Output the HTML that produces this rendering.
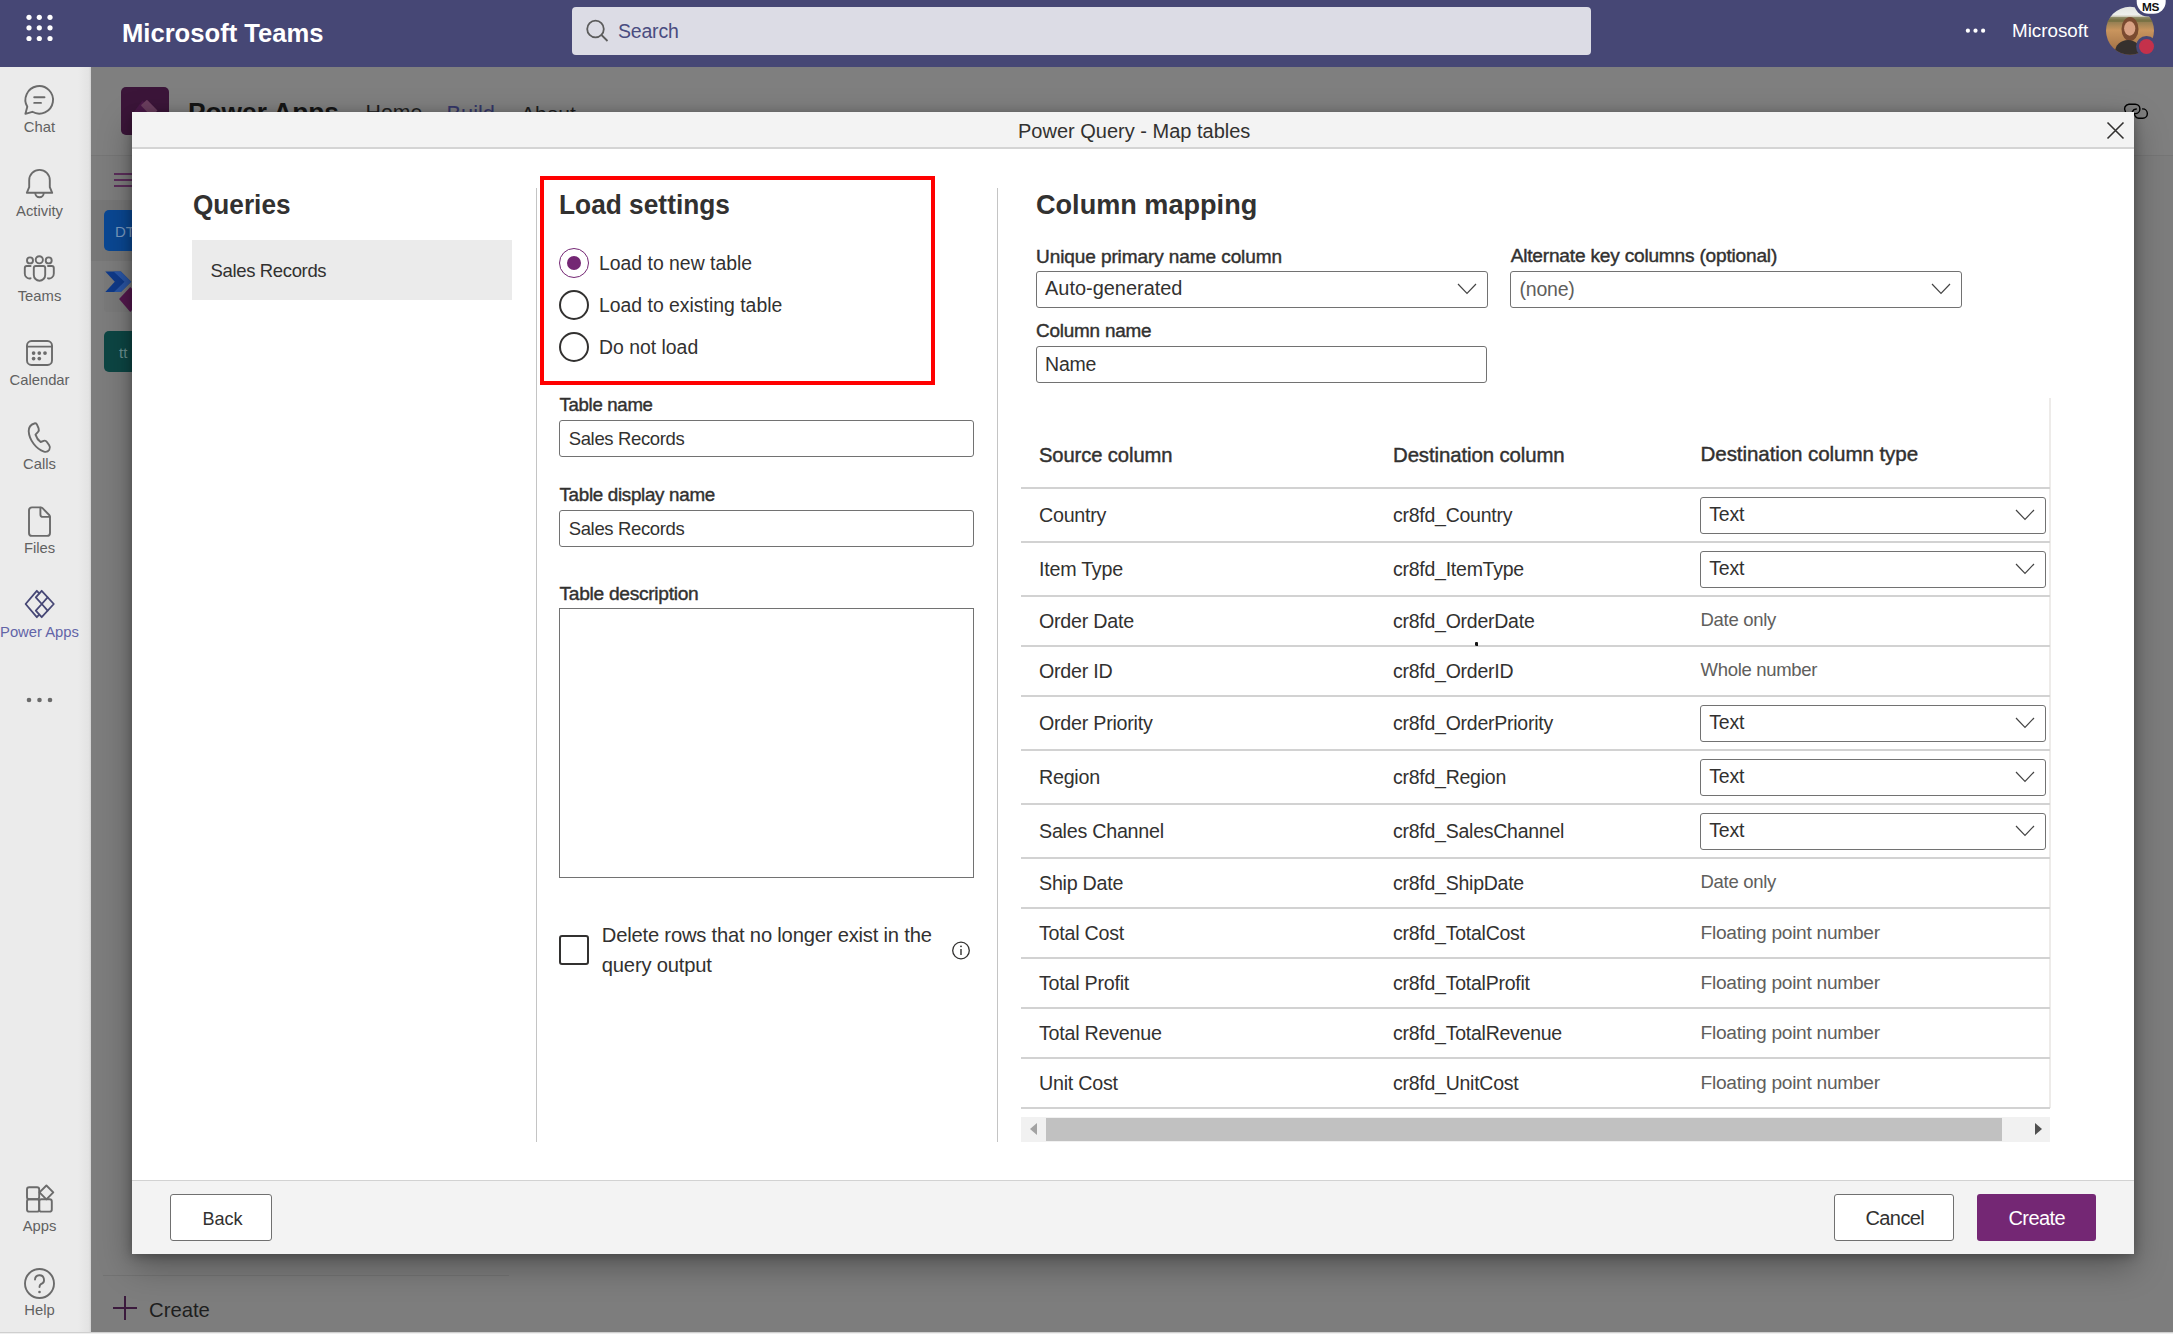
<!DOCTYPE html>
<html><head><meta charset="utf-8"><title>Power Query - Map tables</title>
<style>
*{box-sizing:border-box;margin:0;padding:0}
html,body{width:2173px;height:1334px;overflow:hidden;font-family:"Liberation Sans",sans-serif;background:#7c7c7c;color:#323130}
.a{position:absolute}
.t{position:absolute;line-height:1;white-space:nowrap}
#top{left:0;top:0;width:2173px;height:67px;background:#464775}
#rail{left:0;top:67px;width:91px;height:1267px;background:linear-gradient(90deg,#ebebeb 0,#ebebeb 78px,#e3e3e3 89px,#d0d0d0 91px)}
#bg{left:91px;top:67px;width:2082px;height:1265px;background:#7d7d7d;overflow:hidden}
#dlg{left:132px;top:112px;width:2002px;height:1142px;background:#fff;box-shadow:0 12px 32px rgba(0,0,0,.32),0 2px 10px rgba(0,0,0,.28)}
.rl{color:#616161;font-size:14.8px;text-align:center;width:79px;left:0}
.lbl{font-size:17.2px;font-weight:700;color:#323130}
.body{font-size:19px;letter-spacing:-0.3px;color:#323130}
.h1{font-size:26px;font-weight:700;color:#323130;letter-spacing:-0.2px}
.inp{position:absolute;border:1.75px solid #727272;border-radius:3px;background:#fff}
.row{position:absolute;left:1021px;width:1029px;border-bottom:2px solid #e1dfdd}
.dd{position:absolute;left:1700px;width:346px;height:37px;border:1.5px solid #605e5c;border-radius:3px;background:#fff}
.gray{color:#605e5c}
</style></head><body>
<!-- top bar -->
<div id="top" class="a">
  <svg class="a" style="left:22px;top:11px" width="36" height="36" viewBox="0 0 36 36">
    <g fill="#fff"><circle cx="7" cy="6.3" r="2.6"/><circle cx="17.3" cy="6.3" r="2.6"/><circle cx="28" cy="6.3" r="2.6"/>
    <circle cx="7" cy="16.8" r="2.6"/><circle cx="17.3" cy="16.8" r="2.6"/><circle cx="28" cy="16.8" r="2.6"/>
    <circle cx="7" cy="27.5" r="2.6"/><circle cx="17.3" cy="27.5" r="2.6"/><circle cx="28" cy="27.5" r="2.6"/></g>
  </svg>
  <div class="t" style="left:122px;top:20.8px;font-size:25.6px;font-weight:700;color:#fff;transform:scaleY(1.04);transform-origin:0 21.7px">Microsoft Teams</div>
  <div class="a" style="left:572px;top:7px;width:1019px;height:48px;background:#dcdce5;border-radius:4px"></div>
  <svg class="a" style="left:583px;top:18px" width="28" height="28" viewBox="0 0 28 28"><circle cx="12.5" cy="11" r="8.3" fill="none" stroke="#5c5c5c" stroke-width="1.8"/><line x1="18.5" y1="17" x2="24.5" y2="23" stroke="#5c5c5c" stroke-width="1.8"/></svg>
  <div class="t" style="left:618px;top:22px;font-size:19.5px;color:#4a4c80;letter-spacing:-0.2px">Search</div>
  <svg class="a" style="left:1964px;top:27px" width="24" height="8"><circle cx="3.9" cy="3.7" r="2.1" fill="#fff"/><circle cx="11.5" cy="3.7" r="2.1" fill="#fff"/><circle cx="19.1" cy="3.7" r="2.1" fill="#fff"/></svg>
  <div class="t" style="left:2012px;top:22.4px;font-size:18.8px;color:#fff;letter-spacing:0px">Microsoft</div>
  <svg class="a" style="left:2100px;top:0px" width="73" height="67" viewBox="2100 0 73 67">
    <defs><clipPath id="avc"><circle cx="2130" cy="30.8" r="24"/></clipPath>
    <linearGradient id="avg" x1="0" y1="0" x2="0" y2="1"><stop offset="0" stop-color="#d9dcd8"/><stop offset="0.22" stop-color="#eef0ec"/><stop offset="0.3" stop-color="#8a7a50"/><stop offset="0.45" stop-color="#c9955e"/><stop offset="0.7" stop-color="#a9784a"/><stop offset="1" stop-color="#7a5a3a"/></linearGradient></defs>
    <g clip-path="url(#avc)">
      <rect x="2100" y="0" width="73" height="67" fill="url(#avg)"/>
      <rect x="2100" y="17" width="73" height="5" fill="#6a6a3a" opacity=".55"/>
      <ellipse cx="2130" cy="29" rx="8.5" ry="12" fill="#7a4a30"/>
      <ellipse cx="2129.7" cy="28.5" rx="5.6" ry="7.2" fill="#d9a184"/>
      <ellipse cx="2128" cy="52" rx="13" ry="12" fill="#35302e"/>
    </g>
    <circle cx="2146.5" cy="46.5" r="10.5" fill="#464775"/>
    <circle cx="2146.5" cy="46.5" r="7.5" fill="#c4314b"/>
    <rect x="2134" y="-14" width="34.5" height="30.5" rx="14" fill="#464775"/>
    <rect x="2136.7" y="-12" width="29" height="25.8" rx="12" fill="#fff"/>
  </svg>
  <div class="t" style="left:2142px;top:1.5px;font-size:11.8px;font-weight:700;color:#111;letter-spacing:-0.3px">MS</div>
</div>

<!-- left rail -->
<div id="rail" class="a"></div>


<!-- rail icons -->
<svg class="a" style="left:0;top:67px" width="91" height="1267" viewBox="0 67 91 1267" fill="none" stroke="#6b6b6b" stroke-width="1.9" stroke-linecap="round" stroke-linejoin="round">
  <!-- chat -->
  <path d="M27.3 106.8 L25.4 113.8 L32.3 111.8 A13.8 13.8 0 1 0 27.3 106.8 Z"/>
  <line x1="34.2" y1="97.2" x2="44.5" y2="97.2"/><line x1="34.2" y1="102.9" x2="41" y2="102.9"/>
  <!-- activity bell -->
  <path d="M29.2 187.2 L29.2 180.2 A10.3 10.3 0 0 1 49.8 180.2 L49.8 187.2 L52.2 192.8 L26.8 192.8 Z"/>
  <path d="M35.3 193 A4.2 4.2 0 0 0 43.7 193"/>
  <!-- teams -->
  <circle cx="39.3" cy="259.8" r="3.6"/><circle cx="30" cy="260.4" r="3"/><circle cx="48.7" cy="260.4" r="3"/>
  <path d="M33.8 268 Q33.8 266 35.8 266 L43.2 266 Q45.2 266 45.2 268 L45.2 275 A5.7 5.7 0 0 1 33.8 275 Z"/>
  <path d="M30.6 266 L26.8 266 Q24.8 266 24.8 268 L24.8 273.6 A4.7 4.7 0 0 0 30.6 278.3"/><path d="M48 266 L51.8 266 Q53.8 266 53.8 268 L53.8 273.6 A4.7 4.7 0 0 1 48 278.3"/>
  <!-- calendar -->
  <rect x="27" y="341" width="25" height="24" rx="4.5"/><line x1="27" y1="346.6" x2="52" y2="346.6"/>
  <!-- calls -->
  <path d="M34.3 423.5 C31 424.6 28.6 427.2 28.7 431.2 C29.2 440 36.2 449 44 451.6 C46 452.3 48 451.6 49.3 449.7 C50.3 448.1 50.1 446.6 49.2 445.3 L46.9 442 C46.1 440.8 44.9 440.4 43.7 440.8 L40.6 442 C38.4 440.4 36.4 437.4 35.5 434.6 L37.8 432.2 C38.8 431.1 39.1 429.6 38.6 428.3 L37.1 424.9 C36.6 423.7 35.4 423.1 34.3 423.5 Z"/>
  <!-- files -->
  <path d="M32 507.4 L40.6 507.4 Q41.7 507.4 42.5 508.2 L49.2 515 Q50 515.8 50 517 L50 532.9 Q50 535.9 47 535.9 L32 535.9 Q29 535.9 29 532.9 L29 510.4 Q29 507.4 32 507.4 Z"/><path d="M40.4 507.6 L40.4 514.4 Q40.4 516.9 42.9 516.9 L49.8 516.9"/>
  <!-- apps -->
  <rect x="27" y="1187.2" width="12.2" height="12.1" rx="2.2"/><rect x="27" y="1199.3" width="12.2" height="12.3" rx="2.2"/><rect x="39.2" y="1199.3" width="12.6" height="12.3" rx="2.2"/>
  <path d="M39.5 1192.4 L46.4 1185.5 L53.3 1192.4 L46.4 1199.3 Z"/>
  <!-- help -->
  <circle cx="39.5" cy="1283.5" r="14.5"/><path d="M35 1279.5 A4.5 4.5 0 1 1 41 1284 C39.8 1284.8 39.5 1285.5 39.5 1287"/>
</svg>
<svg class="a" style="left:0;top:67px" width="91" height="1267" viewBox="0 67 91 1267">
  <g fill="#6b6b6b"><circle cx="33.6" cy="353.1" r="1.85"/><circle cx="39.3" cy="353.1" r="1.85"/><circle cx="45" cy="353.1" r="1.85"/><circle cx="33.6" cy="358.6" r="1.85"/><circle cx="39.3" cy="358.6" r="1.85"/>
  <circle cx="39.5" cy="1292" r="1.3"/>
  <circle cx="29" cy="700" r="2.3"/><circle cx="39.5" cy="700" r="2.3"/><circle cx="50" cy="700" r="2.3"/></g>
  <g fill="none" stroke="#464775" stroke-width="1.8" stroke-linejoin="round" stroke-linecap="round">
    <path d="M39.2 593.4 L36.8 590.8 L25.6 604 L36.8 617.2 L39.2 614.6"/>
    <path d="M41.7 590.8 L53.8 604 L41.7 617.2 L35.8 610.6 L41.8 604 L35.8 597.4 Z"/>
    <path d="M41.8 604 L47.6 597.4 M41.8 604 L47.6 610.6"/>
  </g>
</svg>
<div class="t rl" style="top:120px">Chat</div>
<div class="t rl" style="top:204px">Activity</div>
<div class="t rl" style="top:289px">Teams</div>
<div class="t rl" style="top:373px">Calendar</div>
<div class="t rl" style="top:457px">Calls</div>
<div class="t rl" style="top:541px">Files</div>
<div class="t rl" style="top:625px;color:#6264a7">Power Apps</div>
<div class="t rl" style="top:1219px">Apps</div>
<div class="t rl" style="top:1303px">Help</div>

<!-- overlaid background app -->
<div id="bg" class="a">
  <div class="a" style="left:0;top:0;width:2082px;height:89px;background:#7f7f7f;border-bottom:1px solid #767676"></div>
  <div class="a" style="left:30px;top:20px;width:48px;height:48px;border-radius:5px;background:#3b1539"></div>
  <svg class="a" style="left:30px;top:20px" width="48" height="48" viewBox="30 20 48 48"><path d="M42 46 L51.6 33.4 L61 46 Z" fill="#4a1848"/><path d="M55.3 33.3 Q55.9 32.8 56.5 33.3 L66.5 43.5 L60.5 49.5 L50.4 39 Q49.9 38.4 50.4 37.8 Z" fill="#6a3e5e"/></svg>
  <div class="t" style="left:97px;top:32.3px;font-size:26.3px;font-weight:700;color:#151515">Power Apps</div>
  <div class="t" style="left:274.5px;top:36.1px;font-size:21.3px;color:#1f1f1f">Home</div>
  <div class="t" style="left:355.5px;top:36.1px;font-size:21.8px;color:#35376a">Build</div>
  <div class="t" style="left:430px;top:36.1px;font-size:21px;color:#1f1f1f">About</div>
  <div class="a" style="left:0;top:133px;width:420px;height:61px;background:#777"></div>
  <div class="a" style="left:23px;top:106px;width:18px;height:2px;background:#5c2e5b"></div>
  <div class="a" style="left:23px;top:112px;width:18px;height:2px;background:#5c2e5b"></div>
  <div class="a" style="left:23px;top:118px;width:18px;height:2px;background:#5c2e5b"></div>
  <div class="a" style="left:13px;top:143px;width:60px;height:41px;border-radius:5px;background:#0a4894"></div>
  <div class="t" style="left:24px;top:157px;font-size:15px;color:#7a9ac0">DT</div>
  <div class="a" style="left:13px;top:203px;width:60px;height:42px;border-radius:4px;background:#7a7a7a"></div>
  <svg class="a" style="left:0;top:195px" width="60" height="60" viewBox="0 195 60 60"><path d="M14.3 204.4 L29.9 204.4 L40.2 214.7 L29.9 225 L14.3 225 L23.8 214.7 Z" fill="#0f3a8a"/><path d="M22.5 204.4 L29.9 204.4 L40.2 214.7 L29.9 225 L23 225 L33.5 214.7 Z" fill="#2d5aa8" opacity=".9"/><path d="M28.1 232 L39.3 219.9 L50.5 232 L39.3 244.9 Z" fill="#55184f"/></svg>
  <div class="a" style="left:13px;top:264px;width:60px;height:41px;border-radius:5px;background:#0d4644"></div>
  <div class="t" style="left:28px;top:278px;font-size:15px;color:#6a9090">tt</div>
  <div class="a" style="left:12px;top:1207.5px;width:406px;height:1px;background:#737373"></div>
  <div class="a" style="left:33px;top:1229px;width:2px;height:24px;background:#3b1a3d"></div>
  <div class="a" style="left:22px;top:1240px;width:24px;height:2px;background:#3b1a3d"></div>
  <div class="t" style="left:58px;top:1232.5px;font-size:20.3px;color:#1e1e1e">Create</div>
  <svg class="a" style="left:2029px;top:33px" width="30" height="22" viewBox="2120 100 30 22"><g fill="none" stroke="#000" stroke-width="1.4" stroke-linecap="round">
    <path d="M2125.4 111.6 A4.7 4.7 0 0 1 2128.9 104.2 L2135.2 104.2 A4.7 4.7 0 0 1 2135.2 113.6"/>
    <path d="M2132.4 111.6 A4.5 4.5 0 0 1 2136.3 109"/>
    <path d="M2142.6 108.9 A4.65 4.65 0 0 1 2142.8 118.2 L2138.8 118.2 A4.6 4.6 0 0 1 2134.4 113.4"/></g></svg>
</div>

<div class="a" style="left:0;top:1332px;width:2173px;height:1px;background:#cfcfcf;z-index:5"></div>
<div class="a" style="left:0;top:1333px;width:2173px;height:1px;background:#efefef;z-index:5"></div>
<!-- dialog -->
<div id="dlg" class="a">
  <div class="a" style="left:0;top:0;width:2002px;height:37px;background:#f3f3f3;border-bottom:2px solid #d4d4d4"></div>
</div>
<!-- dialog content -->
<div class="t " style="left:1018px;top:120.97px;font-size:20px;color:#323130">Power Query - Map tables</div>
<svg class="a" style="left:2106px;top:121px" width="19" height="19" viewBox="0 0 19 19"><path d="M1.5 1.5 L17.5 17.5 M17.5 1.5 L1.5 17.5" stroke="#323130" stroke-width="1.6"/></svg>
<div class="a" style="left:132px;top:1180px;width:2002px;height:74px;background:#f3f3f3;border-top:1.5px solid #d2d2d2"></div>
<div class="a" style="left:170px;top:1194px;width:102px;height:47px;background:#fff;border:1.5px solid #707070;border-radius:3px"></div>
<div class="t " style="left:202.4px;top:1209.98px;font-size:18.1px;letter-spacing:0px">Back</div>
<div class="a" style="left:1834px;top:1194px;width:120px;height:47px;background:#fff;border:1.5px solid #707070;border-radius:3px"></div>
<div class="t " style="left:1865.5px;top:1208.07px;font-size:20px;letter-spacing:-0.6px">Cancel</div>
<div class="a" style="left:1977px;top:1194px;width:119px;height:47px;background:#742774;border-radius:3px"></div>
<div class="t " style="left:2008.5px;top:1208.07px;font-size:20px;color:#fff;letter-spacing:-0.6px">Create</div>
<div class="a" style="left:535.5px;top:187.7px;width:1.2px;height:954.3px;background:#c4c4c4"></div>
<div class="a" style="left:996.6px;top:187.7px;width:1.2px;height:954.3px;background:#c4c4c4"></div>
<div class="t " style="left:193px;top:191.82px;font-size:26.2px;font-weight:700;transform:scaleY(1.09);transform-origin:0 22.2px">Queries</div>
<div class="a" style="left:192px;top:240px;width:320px;height:60px;background:#ebebeb"></div>
<div class="t " style="left:210.5px;top:261.94px;font-size:18.5px;letter-spacing:-0.35px">Sales Records</div>
<div class="a" style="left:540px;top:176px;width:395px;height:209px;border:4px solid #f00"></div>
<div class="t " style="left:559px;top:192.24px;font-size:26.3px;font-weight:700;transform:scaleY(1.07);transform-origin:0 22.3px">Load settings</div>
<div class="a" style="left:559px;top:248px;width:30px;height:30px;border-radius:50%;border:1.8px solid #742774"></div>
<div class="a" style="left:566.8px;top:255.6px;width:14.4px;height:14.4px;border-radius:50%;background:#742774"></div>
<div class="a" style="left:559px;top:290px;width:30px;height:30px;border-radius:50%;border:2px solid #323130"></div>
<div class="a" style="left:559px;top:332px;width:30px;height:30px;border-radius:50%;border:2px solid #323130"></div>
<div class="t " style="left:599px;top:253.98px;font-size:19.4px;">Load to new table</div>
<div class="t " style="left:599px;top:295.98px;font-size:19.4px;">Load to existing table</div>
<div class="t " style="left:599px;top:337.98px;font-size:19.4px;">Do not load</div>
<div class="t " style="left:559.5px;top:396.26px;font-size:18.6px;-webkit-text-stroke:0.42px #323130;letter-spacing:-0.3px">Table name</div>
<div class="inp" style="left:559px;top:420px;width:415px;height:37px"></div>
<div class="t " style="left:568.7px;top:430.24px;font-size:18.5px;letter-spacing:-0.35px">Sales Records</div>
<div class="t " style="left:559.5px;top:486.09px;font-size:18.8px;-webkit-text-stroke:0.42px #323130;letter-spacing:-0.3px">Table display name</div>
<div class="inp" style="left:559px;top:510px;width:415px;height:37px"></div>
<div class="t " style="left:568.7px;top:519.74px;font-size:18.5px;letter-spacing:-0.35px">Sales Records</div>
<div class="t " style="left:559.5px;top:583.55px;font-size:19.2px;-webkit-text-stroke:0.42px #323130;letter-spacing:-0.3px">Table description</div>
<div class="inp" style="left:559px;top:608px;width:415px;height:270px;border-radius:0"></div>
<div class="a" style="left:559px;top:935px;width:30px;height:30px;border-radius:3px;border:2px solid #323130"></div>
<div class="t " style="left:601.8px;top:924.60px;font-size:20.2px;letter-spacing:-0.2px">Delete rows that no longer exist in the</div>
<div class="t " style="left:601.8px;top:954.60px;font-size:20.2px;letter-spacing:-0.2px">query output</div>
<svg class="a" style="left:951px;top:941px" width="20" height="20" viewBox="0 0 20 20"><circle cx="10" cy="9.5" r="8.3" fill="none" stroke="#323130" stroke-width="1.3"/><line x1="10" y1="8" x2="10" y2="14" stroke="#323130" stroke-width="1.4"/><circle cx="10" cy="5.3" r="0.9" fill="#323130"/></svg>
<div class="t " style="left:1036px;top:190.76px;font-size:27.1px;font-weight:700;transform:scaleY(1.05);transform-origin:0 22.9px">Column mapping</div>
<div class="t " style="left:1036px;top:247.07px;font-size:19.05px;-webkit-text-stroke:0.42px #323130;letter-spacing:-0.1px">Unique primary name column</div>
<div class="inp" style="left:1035.5px;top:270.5px;width:452px;height:37.3px"></div>
<div class="t " style="left:1045px;top:278.51px;font-size:19.95px;letter-spacing:0px">Auto-generated</div>
<svg class="a" style="left:1456.5px;top:283.4px" width="20" height="11.4" viewBox="-1 -1 20 11.4"><path d="M0 0 L9.0 9.4 L18 0" fill="none" stroke="#444" stroke-width="1.2"/></svg>
<div class="t " style="left:1510.7px;top:246.43px;font-size:19.1px;-webkit-text-stroke:0.42px #323130;letter-spacing:-0.2px">Alternate key columns (optional)</div>
<div class="inp" style="left:1510px;top:270.5px;width:452px;height:37.3px"></div>
<div class="t " style="left:1519.5px;top:279.79px;font-size:19.5px;color:#605e5c;letter-spacing:-0.2px">(none)</div>
<svg class="a" style="left:1930.7px;top:283.4px" width="20" height="11.4" viewBox="-1 -1 20 11.4"><path d="M0 0 L9.0 9.4 L18 0" fill="none" stroke="#444" stroke-width="1.2"/></svg>
<div class="t " style="left:1036px;top:322.00px;font-size:18.9px;-webkit-text-stroke:0.42px #323130;letter-spacing:-0.2px">Column name</div>
<div class="inp" style="left:1036px;top:346px;width:451px;height:37px"></div>
<div class="t " style="left:1045px;top:355.29px;font-size:19.5px;letter-spacing:-0.2px">Name</div>
<div class="a" style="left:2049px;top:398px;width:1.5px;height:710px;background:#edebe9"></div>
<div class="t " style="left:1039px;top:444.70px;font-size:20.2px;-webkit-text-stroke:0.42px #323130;letter-spacing:-0.1px">Source column</div>
<div class="t " style="left:1393px;top:444.53px;font-size:20.4px;-webkit-text-stroke:0.42px #323130;letter-spacing:-0.1px">Destination column</div>
<div class="t " style="left:1700.5px;top:444.36px;font-size:20.6px;-webkit-text-stroke:0.42px #323130;letter-spacing:-0.1px">Destination column type</div>
<div class="a" style="left:1021px;top:487px;width:1029px;height:2px;background:#d2d2d2"></div>
<div class="t " style="left:1039px;top:505.82px;font-size:19.7px;letter-spacing:-0.25px">Country</div>
<div class="t " style="left:1393px;top:505.99px;font-size:19.5px;letter-spacing:-0.25px">cr8fd_Country</div>
<div class="inp" style="left:1700px;top:496.5px;width:346px;height:37.3px"></div>
<div class="t " style="left:1709.3px;top:505.49px;font-size:19.5px;letter-spacing:-0.2px">Text</div>
<svg class="a" style="left:2015.2px;top:509.4px" width="20" height="11.4" viewBox="-1 -1 20 11.4"><path d="M0 0 L9.0 9.4 L18 0" fill="none" stroke="#444" stroke-width="1.2"/></svg>
<div class="a" style="left:1021px;top:541px;width:1029px;height:2px;background:#d2d2d2"></div>
<div class="t " style="left:1039px;top:559.82px;font-size:19.7px;letter-spacing:-0.25px">Item Type</div>
<div class="t " style="left:1393px;top:559.99px;font-size:19.5px;letter-spacing:-0.25px">cr8fd_ItemType</div>
<div class="inp" style="left:1700px;top:550.5px;width:346px;height:37.3px"></div>
<div class="t " style="left:1709.3px;top:559.49px;font-size:19.5px;letter-spacing:-0.2px">Text</div>
<svg class="a" style="left:2015.2px;top:563.4px" width="20" height="11.4" viewBox="-1 -1 20 11.4"><path d="M0 0 L9.0 9.4 L18 0" fill="none" stroke="#444" stroke-width="1.2"/></svg>
<div class="a" style="left:1021px;top:595px;width:1029px;height:2px;background:#d2d2d2"></div>
<div class="t " style="left:1039px;top:611.82px;font-size:19.7px;letter-spacing:-0.25px">Order Date</div>
<div class="t " style="left:1393px;top:611.99px;font-size:19.5px;letter-spacing:-0.25px">cr8fd_OrderDate</div>
<div class="t " style="left:1700.5px;top:611.34px;font-size:18.5px;color:#605e5c;letter-spacing:-0.3px">Date only</div>
<div class="a" style="left:1021px;top:645px;width:1029px;height:2px;background:#d2d2d2"></div>
<div class="t " style="left:1039px;top:661.82px;font-size:19.7px;letter-spacing:-0.25px">Order ID</div>
<div class="t " style="left:1393px;top:661.99px;font-size:19.5px;letter-spacing:-0.25px">cr8fd_OrderID</div>
<div class="t " style="left:1700.5px;top:661.34px;font-size:18.5px;color:#605e5c;letter-spacing:-0.3px">Whole number</div>
<div class="a" style="left:1021px;top:695px;width:1029px;height:2px;background:#d2d2d2"></div>
<div class="t " style="left:1039px;top:713.82px;font-size:19.7px;letter-spacing:-0.25px">Order Priority</div>
<div class="t " style="left:1393px;top:713.99px;font-size:19.5px;letter-spacing:-0.25px">cr8fd_OrderPriority</div>
<div class="inp" style="left:1700px;top:704.5px;width:346px;height:37.3px"></div>
<div class="t " style="left:1709.3px;top:713.49px;font-size:19.5px;letter-spacing:-0.2px">Text</div>
<svg class="a" style="left:2015.2px;top:717.4px" width="20" height="11.4" viewBox="-1 -1 20 11.4"><path d="M0 0 L9.0 9.4 L18 0" fill="none" stroke="#444" stroke-width="1.2"/></svg>
<div class="a" style="left:1021px;top:749px;width:1029px;height:2px;background:#d2d2d2"></div>
<div class="t " style="left:1039px;top:767.82px;font-size:19.7px;letter-spacing:-0.25px">Region</div>
<div class="t " style="left:1393px;top:767.99px;font-size:19.5px;letter-spacing:-0.25px">cr8fd_Region</div>
<div class="inp" style="left:1700px;top:758.5px;width:346px;height:37.3px"></div>
<div class="t " style="left:1709.3px;top:767.49px;font-size:19.5px;letter-spacing:-0.2px">Text</div>
<svg class="a" style="left:2015.2px;top:771.4px" width="20" height="11.4" viewBox="-1 -1 20 11.4"><path d="M0 0 L9.0 9.4 L18 0" fill="none" stroke="#444" stroke-width="1.2"/></svg>
<div class="a" style="left:1021px;top:803px;width:1029px;height:2px;background:#d2d2d2"></div>
<div class="t " style="left:1039px;top:821.82px;font-size:19.7px;letter-spacing:-0.25px">Sales Channel</div>
<div class="t " style="left:1393px;top:821.99px;font-size:19.5px;letter-spacing:-0.25px">cr8fd_SalesChannel</div>
<div class="inp" style="left:1700px;top:812.5px;width:346px;height:37.3px"></div>
<div class="t " style="left:1709.3px;top:821.49px;font-size:19.5px;letter-spacing:-0.2px">Text</div>
<svg class="a" style="left:2015.2px;top:825.4px" width="20" height="11.4" viewBox="-1 -1 20 11.4"><path d="M0 0 L9.0 9.4 L18 0" fill="none" stroke="#444" stroke-width="1.2"/></svg>
<div class="a" style="left:1021px;top:857px;width:1029px;height:2px;background:#d2d2d2"></div>
<div class="t " style="left:1039px;top:873.82px;font-size:19.7px;letter-spacing:-0.25px">Ship Date</div>
<div class="t " style="left:1393px;top:873.99px;font-size:19.5px;letter-spacing:-0.25px">cr8fd_ShipDate</div>
<div class="t " style="left:1700.5px;top:873.34px;font-size:18.5px;color:#605e5c;letter-spacing:-0.3px">Date only</div>
<div class="a" style="left:1021px;top:907px;width:1029px;height:2px;background:#d2d2d2"></div>
<div class="t " style="left:1039px;top:923.82px;font-size:19.7px;letter-spacing:-0.25px">Total Cost</div>
<div class="t " style="left:1393px;top:923.99px;font-size:19.5px;letter-spacing:-0.25px">cr8fd_TotalCost</div>
<div class="t " style="left:1700.5px;top:922.75px;font-size:19.2px;color:#605e5c;letter-spacing:-0.3px">Floating point number</div>
<div class="a" style="left:1021px;top:957px;width:1029px;height:2px;background:#d2d2d2"></div>
<div class="t " style="left:1039px;top:973.82px;font-size:19.7px;letter-spacing:-0.25px">Total Profit</div>
<div class="t " style="left:1393px;top:973.99px;font-size:19.5px;letter-spacing:-0.25px">cr8fd_TotalProfit</div>
<div class="t " style="left:1700.5px;top:972.75px;font-size:19.2px;color:#605e5c;letter-spacing:-0.3px">Floating point number</div>
<div class="a" style="left:1021px;top:1007px;width:1029px;height:2px;background:#d2d2d2"></div>
<div class="t " style="left:1039px;top:1023.82px;font-size:19.7px;letter-spacing:-0.25px">Total Revenue</div>
<div class="t " style="left:1393px;top:1023.99px;font-size:19.5px;letter-spacing:-0.25px">cr8fd_TotalRevenue</div>
<div class="t " style="left:1700.5px;top:1022.75px;font-size:19.2px;color:#605e5c;letter-spacing:-0.3px">Floating point number</div>
<div class="a" style="left:1021px;top:1057px;width:1029px;height:2px;background:#d2d2d2"></div>
<div class="t " style="left:1039px;top:1073.82px;font-size:19.7px;letter-spacing:-0.25px">Unit Cost</div>
<div class="t " style="left:1393px;top:1073.99px;font-size:19.5px;letter-spacing:-0.25px">cr8fd_UnitCost</div>
<div class="t " style="left:1700.5px;top:1072.75px;font-size:19.2px;color:#605e5c;letter-spacing:-0.3px">Floating point number</div>
<div class="a" style="left:1021px;top:1107px;width:1029px;height:2px;background:#d2d2d2"></div>
<div class="a" style="left:1021px;top:1117px;width:1029px;height:25px;background:#f1f1f1"></div>
<div class="a" style="left:1046px;top:1118px;width:956px;height:23px;background:#c1c1c1"></div>
<svg class="a" style="left:1028px;top:1122px" width="12" height="14"><path d="M2 7 L9 1 L9 13 Z" fill="#a3a3a3"/></svg>
<svg class="a" style="left:2032px;top:1122px" width="12" height="14"><path d="M10 7 L3 1 L3 13 Z" fill="#505050"/></svg>
<div class="a" style="left:1474.5px;top:642px;width:3.5px;height:3.5px;border-radius:1px 1px 0 1.5px;background:#151515"></div>
</body></html>
